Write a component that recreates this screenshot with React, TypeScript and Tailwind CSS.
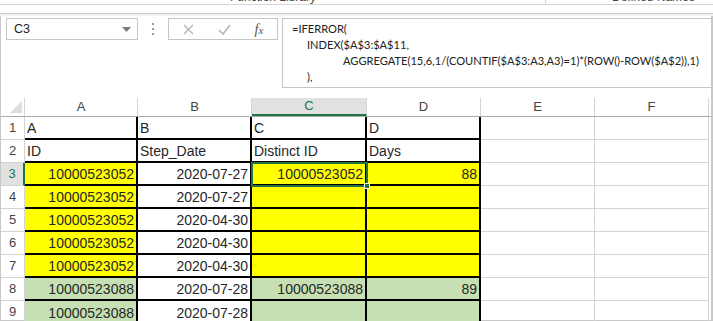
import * as React from 'react';

type Fill = 'y' | 'g' | '';

interface Cell {
  text: string;
  align: 'left' | 'right';
  fill: Fill;
}

const columns = [
  { key: 'A', width: 113 },
  { key: 'B', width: 114 },
  { key: 'C', width: 115 },
  { key: 'D', width: 114 },
  { key: 'E', width: 114 },
  { key: 'F', width: 114 },
];

function textRow(values: string[]): Cell[] {
  return values.map((v) => ({ text: v, align: 'left', fill: '' }));
}

function dataRow(id: string, date: string, distinct: string, days: string, fill: Fill): Cell[] {
  return [
    { text: id, align: 'right', fill },
    { text: date, align: 'right', fill: '' },
    { text: distinct, align: 'right', fill },
    { text: days, align: 'right', fill },
  ];
}

const rows: Cell[][] = [
  textRow(['A', 'B', 'C', 'D']),
  textRow(['ID', 'Step_Date', 'Distinct ID', 'Days']),
  dataRow('10000523052', '2020-07-27', '10000523052', '88', 'y'),
  dataRow('10000523052', '2020-07-27', '', '', 'y'),
  dataRow('10000523052', '2020-04-30', '', '', 'y'),
  dataRow('10000523052', '2020-04-30', '', '', 'y'),
  dataRow('10000523052', '2020-04-30', '', '', 'y'),
  dataRow('10000523088', '2020-07-28', '10000523088', '89', 'g'),
  dataRow('10000523088', '2020-07-28', '', '', 'g'),
];

const fillClass: Record<Fill, string> = {
  y: 'bg-[#ffff00]',
  g: 'bg-[#c6e0b4]',
  '': 'bg-white',
};

function FormulaBar() {
  return (
    <div className="flex h-[72px] items-start pl-[5px] pt-[2px]">
      {/* Name box */}
      <div className="flex h-[22px] w-[132px] items-center justify-between border border-[#c6c6c6] bg-white pl-[7px] pr-[6px]">
        <span className="text-[12.5px] text-[#222]">C3</span>
        <svg width="9" height="5" viewBox="0 0 9 5">
          <path d="M0 0 L9 0 L4.5 5 Z" fill="#7a7a7a" />
        </svg>
      </div>
      {/* Dots */}
      <div className="flex h-[22px] w-[30px] flex-col items-center justify-center gap-[3px]">
        <span className="h-[2px] w-[2px] bg-[#9a9a9a]" />
        <span className="h-[2px] w-[2px] bg-[#9a9a9a]" />
        <span className="h-[2px] w-[2px] bg-[#9a9a9a]" />
      </div>
      {/* Cancel / enter / fx */}
      <div className="flex h-[22px] w-[110px] items-center border border-[#c6c6c6] bg-white">
        <div className="flex w-[38px] justify-center">
          <svg width="11" height="11" viewBox="0 0 11 11">
            <path d="M1 1 L10 10 M10 1 L1 10" stroke="#b4b4b4" strokeWidth="1.3" />
          </svg>
        </div>
        <div className="flex w-[34px] justify-center">
          <svg width="13" height="11" viewBox="0 0 13 11">
            <path d="M1 6 L5 10 L12 1" stroke="#b4b4b4" strokeWidth="1.6" fill="none" />
          </svg>
        </div>
        <div className="flex w-[36px] justify-center">
          <span className="font-['Liberation_Serif',serif] text-[14px] italic text-[#555]">
            f<span className="text-[11px]">x</span>
          </span>
        </div>
      </div>
      {/* Formula text */}
      <div className="ml-[4px] h-[70px] flex-1 overflow-hidden whitespace-nowrap border border-r-0 border-[#c6c6c6] bg-white pl-[9px] pt-[2px] font-['Lato',sans-serif] text-[11.1px] leading-[16px] text-[#222]">
        <div>=IFERROR(</div>
        <div className="pl-[15px]">INDEX($A$3:$A$11,</div>
        <div className="pl-[51px]">AGGREGATE(15,6,1/(COUNTIF($A$3:A3,A3)=1)*(ROW()-ROW($A$2)),1)</div>
        <div className="pl-[15px]">),</div>
      </div>
    </div>
  );
}

function ColumnHeader() {
  return (
    <div className="flex h-[19px] border-b border-[#ababab]">
      <div className="relative w-[24px] border-r border-[#d4d4d4]">
        <svg className="absolute left-[9px] top-[3px]" width="12" height="12" viewBox="0 0 12 12">
          <path d="M12 0 L12 12 L0 12 Z" fill="#dcdcdc" />
        </svg>
      </div>
      {columns.map((c) => {
        const active = c.key === 'C';
        return (
          <div
            key={c.key}
            style={{ width: c.width }}
            className={
              active
                ? 'flex items-center justify-center border-r border-b-2 border-r-[#d4d4d4] border-b-[#217346] bg-[#e1e1e1] text-[13px] text-[#217346]'
                : 'flex items-center justify-center border-r border-[#d4d4d4] text-[13px] text-[#444]'
            }
          >
            {c.key}
          </div>
        );
      })}
    </div>
  );
}

function SheetRow({ index, cells }: { index: number; cells: Cell[] }) {
  const active = index === 3;
  const thickBottom = index < 9;
  return (
    <div className="flex h-[23px]">
      <div
        className={
          active
            ? 'flex w-[24px] items-center justify-center border-r-2 border-b border-r-[#217346] border-b-[#d4d4d4] bg-[#e1e1e1] text-[13px] text-[#217346]'
            : 'flex w-[24px] items-center justify-center border-r border-b border-[#d4d4d4] text-[13px] text-[#444]'
        }
      >
        {index}
      </div>
      {columns.map((c, ci) => {
        const cell = cells[ci];
        if (!cell) {
          return <div key={c.key} style={{ width: c.width }} className="border-r border-b border-[#d4d4d4]" />;
        }
        return (
          <div
            key={c.key}
            style={{ width: c.width }}
            className={[
              'flex items-end overflow-hidden whitespace-nowrap pb-[1px] text-[14px] leading-[18px] text-[#262626]',
              'border-r-2 border-r-black',
              thickBottom ? 'border-b-2 border-b-black' : 'border-b border-b-[#d4d4d4]',
              cell.align === 'right' ? 'justify-end pr-[2px]' : 'justify-start pl-[2px]',
              fillClass[cell.fill],
            ].join(' ')}
          >
            {cell.text}
          </div>
        );
      })}
    </div>
  );
}

export default function App() {
  return (
    <div className="relative h-[321px] w-[713px] overflow-hidden bg-white font-['Liberation_Sans',Arial,sans-serif]">
      {/* Ribbon remnant */}
      <div className="flex h-[5px] items-end overflow-hidden border-b border-[#d6d6d6]">
        <span className="ml-[230px] text-[12px] leading-[14px] text-[#444]">Function Library</span>
        <span className="ml-[229px] h-[5px] w-px self-stretch bg-[#d6d6d6]" />
        <span className="ml-[66px] text-[12px] leading-[14px] text-[#444]">Defined Names</span>
      </div>
      <div className="h-[8px]" />
      <div className="h-[3px] border-t border-[#c8c8c8] bg-[#f3f3f3]" />
      <div className="h-[305px] border-l border-r-2 border-b border-[#c8c8c8]">
        <FormulaBar />
        <div className="h-[10px]" />
        <ColumnHeader />
        {rows.map((cells, i) => (
          <SheetRow key={i} index={i + 1} cells={cells} />
        ))}
      </div>
      {/* Active cell outline on C3 */}
      <div className="pointer-events-none absolute left-[251px] top-[162px] h-[25px] w-[117px] border-2 border-[#217346]" />
      <div className="pointer-events-none absolute left-[364px] top-[183px] h-[6px] w-[6px] border border-white bg-[#217346]" />
    </div>
  );
}
